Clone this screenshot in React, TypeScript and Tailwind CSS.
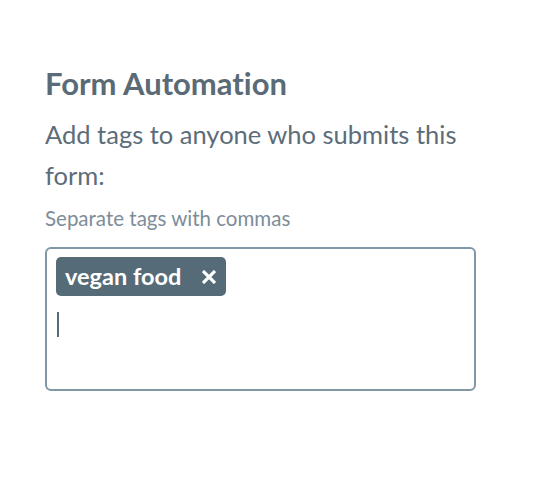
import React from 'react';

const App: React.FC = () => {
  return (
    <div className="min-h-screen bg-white font-['Lato',sans-serif] text-[#5c6d79] [font-variant-ligatures:none]">
      <div className="pt-[65px] pl-[45px]">
        <h2 className="text-[31px] font-bold leading-[36px] text-[#5a6a76]">Form Automation</h2>
        <p className="mt-[13px] w-[430px] text-[25.5px] leading-[41px]">Add tags to anyone who submits this form:</p>
        <p className="mt-[8px] text-[20.5px] leading-[28px] text-[#7d8d99]">Separate tags with commas</p>
        <div className="mt-[15px] h-[144px] w-[431px] rounded-[6px] border-2 border-[#8197a5] pl-[9px] pt-[8px]">
          <div className="inline-flex h-[39px] items-center rounded-[5px] bg-[#566b78] pl-[9px] pr-[10px] text-[23.5px] font-bold text-white">
            <span>vegan food</span>
            <svg className="ml-[21px] shrink-0" width="14" height="14" viewBox="0 0 14 14">
              <path d="M1 1 L13 13 M13 1 L1 13" stroke="white" strokeWidth="3.2" />
            </svg>
          </div>
          <div className="mt-[16px] ml-[1px] h-[25px] w-[2px] bg-[#566b78]" />
        </div>
      </div>
    </div>
  );
};

export default App;
